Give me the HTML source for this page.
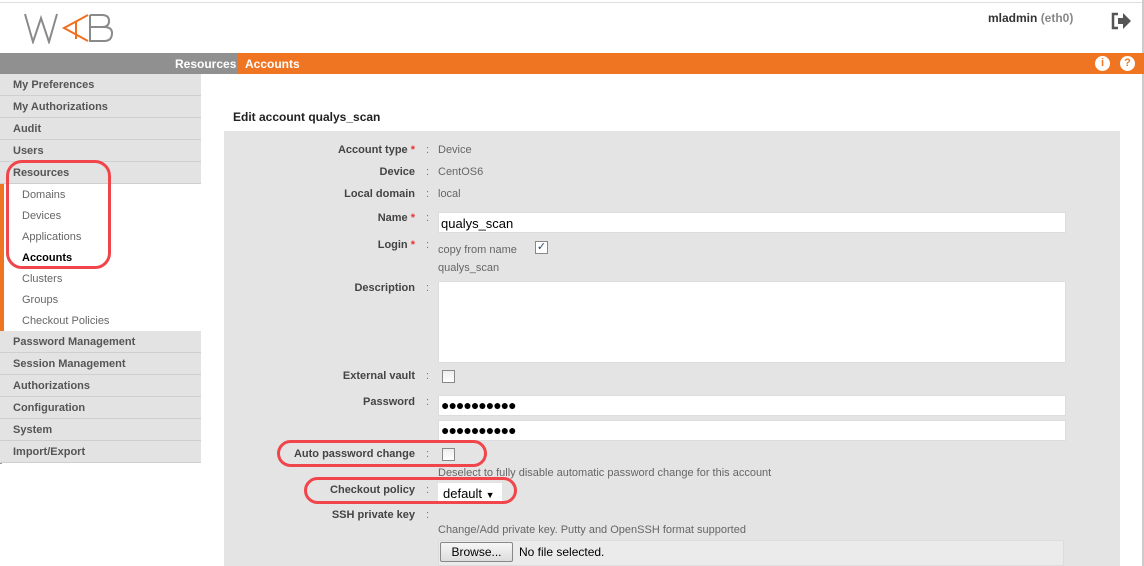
<!DOCTYPE html>
<html><head><meta charset="utf-8"><style>
*{margin:0;padding:0;box-sizing:border-box}
body{width:1144px;height:566px;position:relative;background:#fff;font-family:"Liberation Sans",sans-serif;overflow:hidden}
.a{position:absolute}
.nav{left:0;width:201px;height:22px;background:#e3e3e3;border-bottom:1px solid #cfcfcf;font-size:11px;font-weight:bold;color:#555;padding:5px 0 0 13px}
.sub{left:22px;font-size:11px;color:#666}
.lbl{width:200px;left:215px;text-align:right;font-size:11px;font-weight:bold;color:#444}
.col{left:426px;font-size:11px;color:#777}
.val{left:438px;font-size:11px;color:#666}
.inp{background:#fff;border:1px solid #ddd}
.st{color:#e33}
.cb{width:13px;height:13px;border:1px solid #888;background:linear-gradient(#eee,#fff)}
.ring{border:3px solid #f0454a;border-radius:16px}
.dots{font-size:14px;color:#000;letter-spacing:-1px;padding:1px 0 0 2px}
</style></head><body>
<div class="a" style="left:0;top:2px;width:1144px;height:1px;background:#ddd"></div>
<div class="a" style="left:1142px;top:0;width:2px;height:566px;background:#ccc"></div>
<svg class="a" style="left:24px;top:12px" width="92" height="32" viewBox="0 0 92 32">
<path d="M1 2 L9 30 L17 6 L25 30 L33 2" fill="none" stroke="#8a8a8a" stroke-width="2"/>
<path d="M64 3 L40 16 L64 29 M52 10 L52 27" fill="none" stroke="#f07020" stroke-width="2"/>
<path d="M66 3 V29 H80 Q88 29 88 21 Q88 15 80 15 H66 M66 15 H78 Q85 15 85 9 Q85 3 78 3 H66" fill="none" stroke="#8a8a8a" stroke-width="2"/>
</svg>
<div class="a" style="left:988px;top:11px;font-size:12px;font-weight:bold;color:#333">mladmin <span style="color:#888">(eth0)</span></div>
<svg class="a" style="left:1110px;top:12px" width="22" height="18" viewBox="0 0 22 18"><path d="M8 2 H3 V16 H8" fill="none" stroke="#555" stroke-width="2.5"/><path d="M8 6 H13 V1 L21 9 L13 17 V12 H8Z" fill="#555"/></svg>
<div class="a" style="left:0;top:53px;width:237px;height:21px;background:#909090"></div>
<div class="a" style="left:237px;top:53px;width:907px;height:21px;background:#f07522"></div>
<div class="a" style="left:175px;top:57px;font-size:12px;font-weight:bold;color:#fff">Resources</div>
<div class="a" style="left:245px;top:57px;font-size:12px;font-weight:bold;color:#fff">Accounts</div>
<div class="a" style="left:1095px;top:56px;width:15px;height:15px;border-radius:50%;background:#fff;color:#f07522;font-size:11px;font-weight:bold;text-align:center;line-height:15px">i</div>
<div class="a" style="left:1120px;top:56px;width:15px;height:15px;border-radius:50%;background:#fff;color:#f07522;font-size:11px;font-weight:bold;text-align:center;line-height:15px">?</div>
<div class="a" style="left:0;top:74px;width:2px;height:390px;background:#8a9ab0"></div>
<div class="a nav" style="top:74px">My Preferences</div>
<div class="a nav" style="top:96px">My Authorizations</div>
<div class="a nav" style="top:118px">Audit</div>
<div class="a nav" style="top:140px">Users</div>
<div class="a nav" style="top:162px">Resources</div>
<div class="a" style="left:0;top:184px;width:4px;height:147px;background:#f07522"></div>
<div class="a sub" style="top:189px">Domains</div>
<div class="a sub" style="top:210px">Devices</div>
<div class="a sub" style="top:231px">Applications</div>
<div class="a sub" style="top:252px;color:#000;font-weight:bold">Accounts</div>
<div class="a sub" style="top:273px">Clusters</div>
<div class="a sub" style="top:294px">Groups</div>
<div class="a sub" style="top:315px">Checkout Policies</div>
<div class="a nav" style="top:331px">Password Management</div>
<div class="a nav" style="top:353px">Session Management</div>
<div class="a nav" style="top:375px">Authorizations</div>
<div class="a nav" style="top:397px">Configuration</div>
<div class="a nav" style="top:419px">System</div>
<div class="a nav" style="top:441px">Import/Export</div>
<div class="a ring" style="left:6px;top:160px;width:105px;height:109px"></div>
<div class="a" style="left:233px;top:110px;font-size:12px;font-weight:bold;color:#222">Edit account qualys_scan</div>
<div class="a" style="left:224px;top:131px;width:896px;height:435px;background:#e4e4e4"></div>
<div class="a lbl" style="top:144px">Account type <span class="st">*</span></div><div class="a col" style="top:144px">:</div><div class="a val" style="top:144px">Device</div>
<div class="a lbl" style="top:166px">Device</div><div class="a col" style="top:166px">:</div><div class="a val" style="top:166px">CentOS6</div>
<div class="a lbl" style="top:188px">Local domain</div><div class="a col" style="top:188px">:</div><div class="a val" style="top:188px">local</div>
<div class="a lbl" style="top:212px">Name <span class="st">*</span></div><div class="a col" style="top:212px">:</div>
<div class="a inp" style="left:438px;top:212px;width:628px;height:21px;font-size:13px;padding:3px 0 0 2px;color:#000">qualys_scan</div>
<div class="a lbl" style="top:239px">Login <span class="st">*</span></div><div class="a col" style="top:239px">:</div>
<div class="a val" style="top:244px">copy from name</div>
<div class="a cb" style="left:535px;top:241px;background:#fff;font-size:11px;color:#346;line-height:11px;text-align:center">✓</div>
<div class="a val" style="top:262px">qualys_scan</div>
<div class="a lbl" style="top:282px">Description</div><div class="a col" style="top:282px">:</div>
<div class="a inp" style="left:438px;top:281px;width:628px;height:82px"></div>
<div class="a lbl" style="top:370px">External vault</div><div class="a col" style="top:370px">:</div>
<div class="a cb" style="left:442px;top:370px"></div>
<div class="a lbl" style="top:396px">Password</div><div class="a col" style="top:396px">:</div>
<div class="a inp dots" style="left:438px;top:395px;width:628px;height:21px">●●●●●●●●●●</div>
<div class="a inp dots" style="left:438px;top:420px;width:628px;height:21px">●●●●●●●●●●</div>
<div class="a lbl" style="top:448px">Auto password change</div><div class="a col" style="top:448px">:</div>
<div class="a cb" style="left:442px;top:448px"></div>
<div class="a val" style="top:467px">Deselect to fully disable automatic password change for this account</div>
<div class="a lbl" style="top:484px">Checkout policy</div><div class="a col" style="top:484px">:</div>
<div class="a" style="left:438px;top:483px;width:64px;height:20px;background:#fff;font-size:13px;padding:3px 0 0 5px;color:#000">default <span style="font-size:9px">▼</span></div>
<div class="a lbl" style="top:509px">SSH private key</div><div class="a col" style="top:509px">:</div>
<div class="a val" style="top:524px">Change/Add private key. Putty and OpenSSH format supported</div>
<div class="a" style="left:438px;top:540px;width:626px;height:26px;background:#ebebeb;border:1px solid #ddd"></div>
<div class="a" style="left:440px;top:542px;width:73px;height:20px;background:linear-gradient(#f6f6f6,#ddd);border:1px solid #888;border-radius:2px;font-size:12px;text-align:center;line-height:18px;color:#000">Browse...</div>
<div class="a" style="left:519px;top:545px;font-size:12px;color:#000">No file selected.</div>
<div class="a ring" style="left:277px;top:440px;width:210px;height:27px"></div>
<div class="a ring" style="left:304px;top:477px;width:213px;height:27px"></div>
</body></html>
